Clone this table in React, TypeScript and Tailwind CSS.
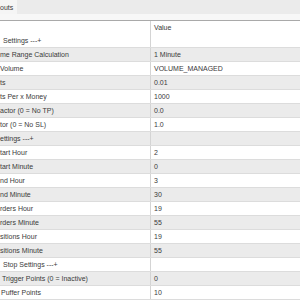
type Row = { label: string; value: string; indent?: string };

const rows: Row[] = [
  { label: "Settings ---+", value: "", indent: "pl-[3px]" },
  { label: "me Range Calculation", value: "1 Minute" },
  { label: "Volume", value: "VOLUME_MANAGED" },
  { label: "ts", value: "0.01" },
  { label: "ts Per x Money", value: "1000" },
  { label: "actor (0 = No TP)", value: "0.0" },
  { label: "tor (0 = No SL)", value: "1.0" },
  { label: "ettings ---+", value: "" },
  { label: "tart Hour", value: "2" },
  { label: "tart Minute", value: "0" },
  { label: "nd Hour", value: "3" },
  { label: "nd Minute", value: "30" },
  { label: "rders Hour", value: "19" },
  { label: "rders Minute", value: "55" },
  { label: "sitions Hour", value: "19" },
  { label: "sitions Minute", value: "55" },
  { label: "Stop Settings ---+", value: "", indent: "pl-[3px]" },
  { label: "Trigger Points (0 = Inactive)", value: "0", indent: "pl-[2px]" },
  { label: "Puffer Points", value: "10", indent: "pl-px" },
  { label: "", value: "" },
];

export default function App() {
  return (
    <div className="h-[300px] w-[300px] overflow-hidden bg-white font-['Liberation_Sans',Arial,sans-serif] text-[7px] text-[#3a3a3a]">
      {/* tab strip */}
      <div className="flex h-[14px] bg-[#ebebeb]">
        <div className="flex w-[17px] items-center bg-[#f5f5f5] leading-none">outs</div>
      </div>
      <div className="h-[6px] bg-[#f7f7f7]" />
      <div className="h-px bg-[#a9a9a9]" />

      {/* header */}
      <div className="flex h-[13px] leading-[13px]">
        <div className="w-[151px] shrink-0 border-r border-[#d4d4d4]" />
        <div className="pl-[3px]">Value</div>
      </div>

      {rows.map((row, i) => (
        <div
          key={i}
          className={
            "flex h-[14px] border-b border-[#dcdcdc] leading-[13px] " +
            (i % 2 === 1 ? "bg-[#ebebeb]" : "bg-white")
          }
        >
          <div
            className={
              "w-[151px] shrink-0 overflow-hidden whitespace-nowrap border-r border-[#d4d4d4] " +
              (row.indent ?? "")
            }
          >
            {row.label}
          </div>
          <div className="pl-[3px] whitespace-nowrap">{row.value}</div>
        </div>
      ))}
    </div>
  );
}
